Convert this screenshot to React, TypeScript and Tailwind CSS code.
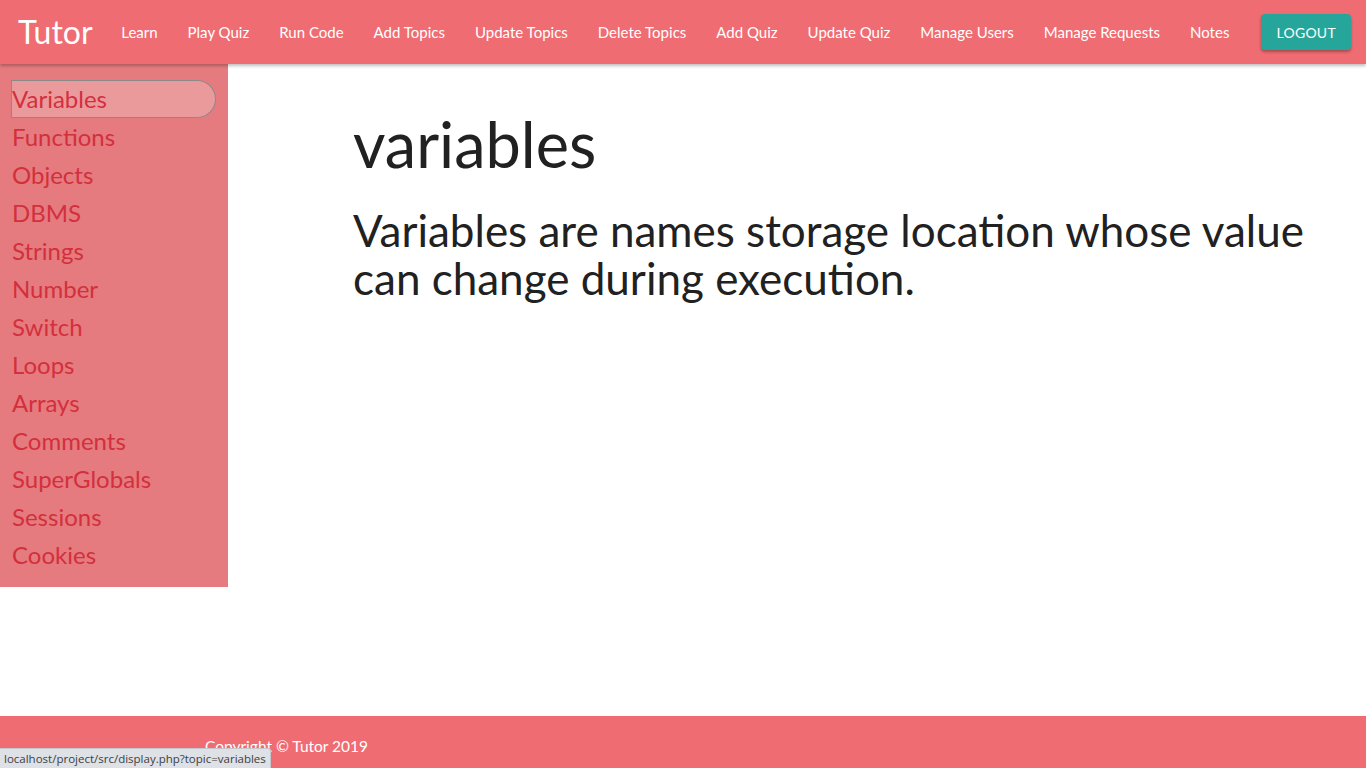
import React from "react";

const navLinks = [
  "Learn",
  "Play Quiz",
  "Run Code",
  "Add Topics",
  "Update Topics",
  "Delete Topics",
  "Add Quiz",
  "Update Quiz",
  "Manage Users",
  "Manage Requests",
  "Notes",
];

const topics = [
  "Variables",
  "Functions",
  "Objects",
  "DBMS",
  "Strings",
  "Number",
  "Switch",
  "Loops",
  "Arrays",
  "Comments",
  "SuperGlobals",
  "Sessions",
  "Cookies",
];

export default function App() {
  const active = "Variables";

  return (
    <div className="min-h-screen flex flex-col bg-white font-['Lato','Liberation_Sans',sans-serif] text-[#212121]">
      {/* NAVBAR */}
      <nav className="relative z-10 h-16 bg-[#ef6c72] text-white flex items-center justify-between shadow-[0_2px_3px_rgba(0,0,0,0.25)]">
        <a href="#" className="pl-[18px] text-[32px] leading-none">Tutor</a>
        <ul className="flex items-center h-full">
          {navLinks.map((l) => (
            <li key={l}>
              <a href="#" className="block px-[15px] text-[15px] leading-[64px]">{l}</a>
            </li>
          ))}
          <li className="pl-[17px] pr-[15px]">
            <button className="h-9 px-[15px] rounded-sm bg-[#26a69a] text-white text-[14px] tracking-[0.02em] shadow-[0_2px_3px_rgba(0,0,0,0.3)]">
              LOGOUT
            </button>
          </li>
        </ul>
      </nav>

      <div className="flex flex-1 items-start">
        {/* SIDEBAR */}
        <aside className="w-[228px] shrink-0 bg-[#e57b7f] pl-[11px] pr-[12px] pt-[16px] pb-[13px]">
          {topics.map((t) => (
            <a
              key={t}
              href="#"
              className={`block h-[38px] text-[24px] leading-[36px] text-[#d32f3c] border ${
                t === active
                  ? "bg-[#eb9a9c] border-[#8a8a8a] rounded-l-[3px] rounded-r-full"
                  : "border-transparent"
              }`}
            >
              {t}
            </a>
          ))}
        </aside>

        {/* CONTENT */}
        <main className="flex-1 pl-[125px] pr-[40px] pt-[44px]">
          <h1 className="text-[63px] leading-[72px]">variables</h1>
          <p className="mt-[26px] text-[44px] leading-[48px]">
            Variables are names storage location whose value can change during execution.
          </p>
        </main>
      </div>

      {/* FOOTER */}
      <footer className="h-[52px] bg-[#ef6c72] text-white mt-[128px] flex items-center pl-[205px] pt-[10px]">
        <span className="text-[15.5px]">Copyright © Tutor 2019</span>
      </footer>

      {/* status bar tooltip */}
      <div className="fixed left-0 bottom-0 h-[20px] px-[4px] bg-[#dee1e6] border-t border-r border-[#c4c7cc] rounded-tr-[3px] text-[11.5px] leading-[19px] text-[#3c4043] font-['Open_Sans',sans-serif]">
        localhost/project/src/display.php?topic=variables
      </div>
    </div>
  );
}
